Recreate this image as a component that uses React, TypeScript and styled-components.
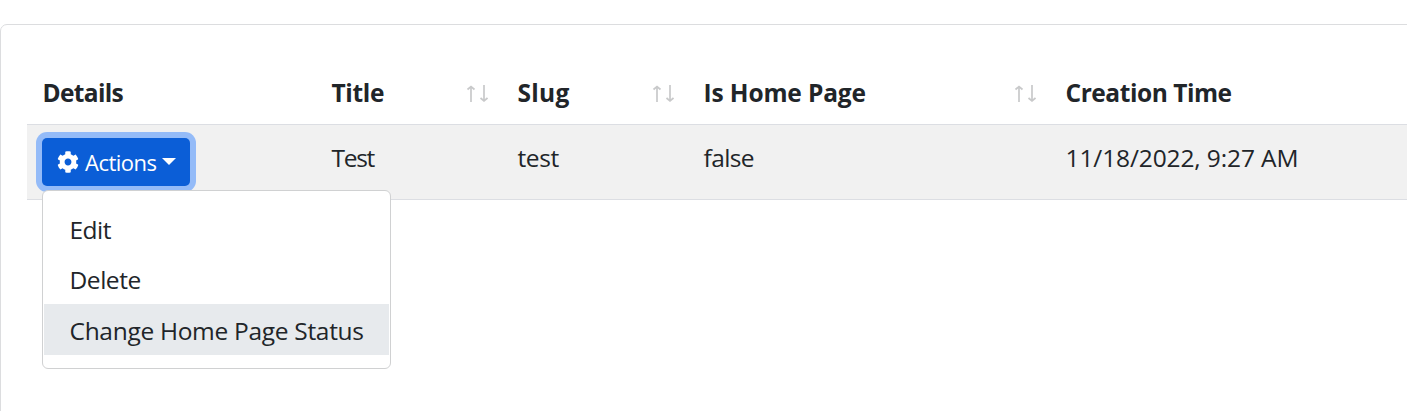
import React from "react";
import styled, { createGlobalStyle } from "styled-components";
import { FaCog } from "react-icons/fa";

const GlobalStyle = createGlobalStyle`
  * { box-sizing: border-box; }
  html, body { margin: 0; background: #fff; overflow: hidden; }
  body {
    color: #212529;
    font-family: "Segoe UI", "Open Sans", "Noto Sans", sans-serif;
    font-size: 24.5px;
    line-height: 38px;
  }
`;

const Page = styled.main`
  width: 1407px;
  height: 411px;
  padding-top: 24px;
  overflow: hidden;
`;

const Card = styled.section`
  width: 1440px;
  height: 420px;
  padding: 36px 0 0 26px;
  border: 1px solid #dcdddf;
  border-radius: 7px;
  background: #fff;
`;

const Row = styled.div`
  display: grid;
  grid-template-columns: 289px 186px 186px 362px 1fr;
  border-bottom: 1px solid #dcdee3;
`;

const HeaderRow = styled(Row)`
  height: 64px;
  font-weight: 700;
`;

const BodyRow = styled(Row)`
  height: 75px;
  background: #f1f1f1;
`;

const HeaderCell = styled.div`
  display: flex;
  justify-content: space-between;
  padding: 13px 14px 0 15.5px;
`;

const Cell = styled.div`
  padding: 14px 0 0 15.5px;
`;

const ActionCell = styled.div`
  position: relative;
  padding: 13px 0 0 15px;
`;

const Label = styled.span<{ $tracking?: number }>`
  white-space: nowrap;
  letter-spacing: ${({ $tracking = 0 }) => $tracking}px;
`;

const SortArrows = styled.svg`
  width: 22px;
  height: 18px;
  margin-top: 11px;
  fill: none;
  stroke: #c8c9ca;
  stroke-width: 1.7;
`;

const ActionButton = styled.button`
  display: flex;
  align-items: center;
  width: 148px;
  height: 48px;
  padding: 0 14px 1px 14.5px;
  border: 0;
  border-radius: 5px;
  background: #0b5ed7;
  box-shadow: 0 0 0 6px #94bbf8;
  color: #fff;
  font: inherit;
  font-size: 22px;

  svg { flex: none; margin-right: 6.5px; }
`;

const Caret = styled.span`
  margin: -1px 0 0 auto;
  border: 7px solid transparent;
  border-top-color: #fff;
  border-bottom: 0;
`;

const Menu = styled.div`
  position: absolute;
  z-index: 1;
  top: 65px;
  left: 15px;
  width: 349px;
  height: 179px;
  padding: 12px 1px 0;
  border: 1px solid #d0d1d2;
  border-radius: 6px;
  background: #fff;
`;

const MenuItem = styled.div<{ $active?: boolean }>`
  height: 50.6px;
  padding: 7.8px 0 0 25.5px;
  background: ${({ $active }) => ($active ? "#e7eaed" : "transparent")};
`;

function Sort() {
  return (
    <SortArrows viewBox="0 0 22 18" aria-hidden="true">
      <path d="M5 17V1.5M1.5 4.5L5 1.5l3.5 3M18 0v15.5M14.5 13l3.5 3 3.5-3" />
    </SortArrows>
  );
}

const columns = [
  { title: "Details", tracking: -0.65, sortable: false },
  { title: "Title", tracking: -0.35, sortable: true },
  { title: "Slug", tracking: 0.3, sortable: true },
  { title: "Is Home Page", tracking: -0.13, sortable: true },
  { title: "Creation Time", tracking: -0.45, sortable: false },
];

const values = [
  { text: "Test", tracking: -1.3 },
  { text: "test", tracking: -0.4 },
  { text: "false", tracking: -0.6 },
  { text: "11/18/2022, 9:27 AM", tracking: -0.12 },
];

const actions = [
  { text: "Edit", tracking: -0.5 },
  { text: "Delete", tracking: -0.45 },
  { text: "Change Home Page Status", tracking: -0.3, active: true },
];

export default function App() {
  return (
    <Page>
      <GlobalStyle />
      <Card>
        <HeaderRow>
          {columns.map((column) => (
            <HeaderCell key={column.title}>
              <Label $tracking={column.tracking}>{column.title}</Label>
              {column.sortable && <Sort />}
            </HeaderCell>
          ))}
        </HeaderRow>
        <BodyRow>
          <ActionCell>
            <ActionButton>
              <FaCog size={22} />
              <Label $tracking={-0.5}>Actions</Label>
              <Caret />
            </ActionButton>
            <Menu>
              {actions.map((action) => (
                <MenuItem key={action.text} $active={action.active}>
                  <Label $tracking={action.tracking}>{action.text}</Label>
                </MenuItem>
              ))}
            </Menu>
          </ActionCell>
          {values.map((value) => (
            <Cell key={value.text}>
              <Label $tracking={value.tracking}>{value.text}</Label>
            </Cell>
          ))}
        </BodyRow>
      </Card>
    </Page>
  );
}
